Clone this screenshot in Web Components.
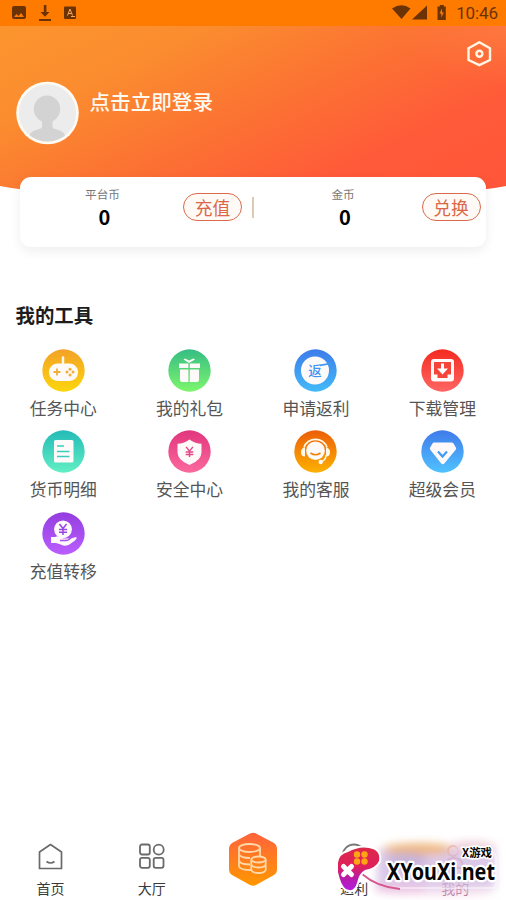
<!DOCTYPE html>
<html lang="zh-CN">
<head>
<meta charset="utf-8">
<title>我的</title>
<style>
html,body{margin:0;padding:0}
body{width:506px;height:900px;overflow:hidden;background:#fff;font-family:"Noto Sans CJK SC",sans-serif}
</style>
</head>
<body>
<profile-page></profile-page>
<script>
const define = (name, html, fill) => customElements.define(name, class extends HTMLElement {
  connectedCallback() {
    if (this.shadowRoot) return;
    this.attachShadow({mode: 'open'}).innerHTML = html;
    if (fill) fill(this, this.shadowRoot);
  }
});

define('status-bar', `
<style>
:host{display:flex;align-items:center;height:26px;box-sizing:border-box;background:#ff7b00;color:#6b3206;font:400 17px/26px Roboto,sans-serif}
svg{display:block}
.clock{width:44px;margin-right:8px;text-align:right;letter-spacing:-.1px;white-space:nowrap}
.left{flex:1}
</style>
<div class="left"><svg width="90" height="26" fill="#6b3206">
<path fill-rule="evenodd" d="M14 6h10a2 2 0 0 1 2 2v9a2 2 0 0 1-2 2H14a2 2 0 0 1-2-2V8a2 2 0 0 1 2-2zM14 17h10l-3-4-2.500 3-2-2z"/>
<path d="M43.800 5h2.600v7h3.100L45 16.800 40.500 12h3.300zM39 19h12v2H39z"/>
<rect x="64" y="6.500" width="12" height="12.500" rx="1"/>
<path d="M67.500 15.500l2.500-6.500 2.500 6.500M68.500 13.500h3M71 16.500h4" stroke="#ffa65a" stroke-width="1" fill="none"/></svg></div>
<svg width="62" height="26" fill="#6b3206"><path d="M0 8.500Q9.500 2 18.500 8.500L9.500 19zM35 5.500V19.500H20z" /><path fill-rule="evenodd" d="M45.500 6.500h2.300V5h4v1.500h2V20h-8.300zM50 8.500l-2.500 5h1.800v4l2.500-5h-1.800z"/></svg>
<div class="clock">10:46</div>`);

define('user-header', `
<style>
:host{display:block;height:164px;position:relative;background:radial-gradient(ellipse 110px 60px at 100% 0,rgba(255,130,70,.55),transparent),linear-gradient(155deg,#fc952e 0%,#fb8c2f 25%,#fc7033 53%,#ff5b39 75%,#ff5539 100%);clip-path:path('M0 0H506V160Q486 164 470 164H36Q20 164 0 160Z')}
.row{display:flex;padding:54.500px 0 0 15.500px;gap:11px}
.avatar{display:block}
.name{color:#fffaf0;font-size:20.600px;font-weight:500;line-height:30px;padding-top:5px;white-space:nowrap}
.set{position:absolute;right:13px;top:14px}
</style>
<div class="row">
<svg class="avatar" width="63" height="64" viewBox="0 0 63 64"><defs><clipPath id="c"><circle cx="31.500" cy="32" r="28.500"/></clipPath></defs><circle cx="31.500" cy="32" r="31.300" fill="#fffaf2"/><circle cx="31.500" cy="32" r="28.700" fill="#ececec"/><g clip-path="url(#c)" fill="#d3d3d3"><ellipse cx="31" cy="28" rx="13.200" ry="13.500"/><path d="M26 38h10.500v8c0 3 12 2 13 10v6H13v-6c1-8 13-7 13-10z"/></g></svg>
<div class="name">点击立即登录</div></div>
<svg class="set" width="28" height="28" fill="none" stroke="#fff6e3"><path d="M14.300 2.200L25 8.200V20L14.300 25.200 3.500 20V8.200z" stroke-width="2.400" stroke-linejoin="round"/><circle cx="14.400" cy="13.700" r="3" stroke-width="2.400"/></svg>`);

define('coin-balance', `
<style>
:host{display:flex;flex:none;box-sizing:border-box}
.info{text-align:center;width:80px;color:#777;font-size:11.600px;line-height:16px;padding-top:9px}
.info span{position:relative;left:-2px}
b{display:block;color:#000;font-weight:700;font-size:20px;line-height:30px}
button{all:unset;box-sizing:border-box;margin-top:16px;width:59px;height:28px;border:1.600px solid #d96a4b;border-radius:15px;color:#da6848;background:#fffaf5;font-size:17.800px;line-height:26px;text-align:center}
</style>
<div class="info"><span><slot></slot></span><b>0</b></div><button></button>`, (el, r) => r.querySelector('button').textContent = el.getAttribute('action'));

define('wallet-card', `
<style>
:host{display:flex;position:relative;margin:-13px 20px 0;height:70px;border-radius:11px;background:#fff;box-shadow:0 4px 12px rgba(0,0,0,.07)}
coin-balance{justify-content:space-between}
.a{padding-left:44.500px;width:222px}
.b{width:175.500px;margin-left:51px}
i{width:2px;height:21px;background:#dccbb4;margin:20px 0 0 10px}
</style>
<coin-balance class="a" action="充值">平台币</coin-balance><i></i><coin-balance class="b" action="兑换">金币</coin-balance>`);

const yen = (x, y, s, c) => `<path transform="translate(${x} ${y}) scale(${s})" d="M-4-6L0-1 4-6M0-1V6M-4.500 0h9M-4.500 3h9" stroke="${c}" stroke-width="1.700" fill="none"/>`;
const icons = {
  game: ['#f3a127', '#fcd60d', '<path d="M21 14V8.500" stroke="#fff8e8" stroke-width="2.500" stroke-linecap="round"/><rect x="7" y="14.500" width="29" height="17.500" rx="8.500"/><path d="M15 19.500v7M11.500 23h7" stroke="#efb032" stroke-width="1.800"/><g fill="#efb032"><circle cx="28" cy="20.300" r="1.500"/><circle cx="28" cy="26" r="1.500"/><circle cx="25" cy="23.100" r="1.500"/><circle cx="31" cy="23.100" r="1.500"/></g>'],
  gift: ['#36bd83', '#7df66d', '<path d="M11 14.500h9.400V19H11zM21.800 14.500H32V19H21.800zM12 20.500h8.400V33H14a2 2 0 0 1-2-2zM21.800 20.500H31V31a2 2 0 0 1-2 2h-7.200zM21 14l-5.500-3.500 1.500-1 4 2 4.500-2 1.500 1z"/>'],
  rebate: ['#3d7cea', '#43baf9', '<circle cx="21" cy="21.500" r="14"/><path d="M26 15.500L37 13.500v1.800L26 17.300z" fill="#3f99f2"/><text x="21" y="27" font-size="13.500" font-weight="500" text-anchor="middle" fill="#3d94f2">返</text>'],
  download: ['#f42b20', '#ff6663', '<rect x="10" y="10" width="23" height="22.500" rx="3"/><path d="M13 13h17v12.500h-3.500v3.500h-10v-3.500H13z" fill="#f54439"/><path d="M20 14.500h3v5h4L21.500 25.500 16 19.500h4z" fill="#fff"/>'],
  bill: ['#24bbb7', '#62efc4', '<rect x="12" y="10" width="19.500" height="22.500" rx="1.500"/><path d="M15 16h7M15 21.500h12.500M15 26.500h12.500" stroke="#37cec0" stroke-width="1.600"/>'],
  shield: ['#e1367d', '#fb699d', '<path d="M21.500 9.500q5 4 12 4.300v8.400q0 8-12 12.800-12-4.800-12-12.800v-8.400q7-.300 12-4.300z"/>' + yen(21.5, 22, .85, '#e54789')],
  service: ['#ec5e09', '#fdb100', '<path d="M10 17.500a12 11.500 0 0 1 23 0" fill="none" stroke="#fff7e8" stroke-width="1.700"/><circle cx="21.500" cy="20.700" r="9.300"/><path d="M11 17.500v9q-4 0-4-4.500 0-4 4-4.500zM32 17.500v9q4 0 4-4.500 0-4-4-4.500z" fill="#fff7e8"/><path d="M32 25q0 5.500-5.500 7" fill="none" stroke="#fff7e8" stroke-width="1.500"/><circle cx="26.700" cy="32" r="2.200"/><path d="M16.500 23q5 3.500 10 0" fill="none" stroke="#f38205" stroke-width="1.700"/>'],
  vip: ['#407bea', '#4fc2ff', '<path d="M13 12.500h17.500q1.300 0 2 1l2.500 4.300q.500 1-.300 2L23.500 33.300q-1.700 1.700-3.500 0L9.300 19.800q-.800-1-.300-2l2.500-4.300q.500-1 1.500-1z"/><path d="M17 21.500l4.500 5 4.500-5" fill="none" stroke="#439bf2" stroke-width="2.200"/>'],
  transfer: ['#943ddf', '#ba5eff', '<circle cx="21" cy="17.300" r="8.900"/><path d="M9 25h4q4-2 8 1.500h8L34 25q1.500 1-1 3.500l-6 4.300q-5 2-9-.500L14 31H9z"/><path d="M18 28.500h6q4-.300 5-3.500" stroke="#a44ced" stroke-width="1.300" fill="none"/>' + yen(21, 17.5, .9, '#9a46e6')]
};
define('tool-item', `
<style>
:host{display:flex;flex-direction:column;align-items:center;height:81.300px}
svg{display:block;flex:none}
span{color:#555;font-size:16.800px;line-height:24px;margin-top:4px;white-space:nowrap}
</style><div class="i"></div><span><slot></slot></span>`, (el, r) => {
  const [a, b, art] = icons[el.getAttribute('icon')];
  r.querySelector('.i').innerHTML = `<svg width="43" height="43" viewBox="0 0 43 43" fill="#fffafa"><defs><linearGradient id="g" x2="0" y2="1"><stop stop-color="${a}"/><stop offset="1" stop-color="${b}"/></linearGradient></defs><circle cx="21.500" cy="21.500" r="21.200" fill="url(#g)"/>${art}</svg>`;
});

define('tool-grid', `
<style>
:host{display:block;margin-top:53px}
h2{margin:0 0 0 15.500px;font-size:19.400px;line-height:30px;font-weight:700;color:#1c1c1c}
div{display:grid;grid-template-columns:repeat(4,126.400px);margin-top:19px}
</style><h2>我的工具</h2><div><slot></slot></div>`);

const navIcons = {
  home: '<svg width="26" height="28" fill="none" stroke="#6a6a6a" stroke-width="1.700"><path d="M1.500 10L12.500 2.500l11 7.500V26.500h-22z" stroke-linejoin="round"/><path d="M8.500 19.500q4 3 8 0"/></svg>',
  hall: '<svg width="28" height="28" fill="none" stroke="#6a6a6a" stroke-width="1.800"><rect x="2" y="2.500" width="9.800" height="10" rx="2"/><circle cx="20.700" cy="7.700" r="5"/><rect x="2" y="15.800" width="9.800" height="10" rx="2"/><rect x="15.700" y="15.800" width="9.800" height="10" rx="2"/></svg>',
  coins: '<svg width="50" height="54"><defs><linearGradient id="g" x2="0" y2="1"><stop stop-color="#ff633d"/><stop offset="1" stop-color="#ff9700"/></linearGradient></defs><path d="M22 1.500q3-1.500 6 0l18 9.500q3 2 3 5v22q0 3-3 5l-18 10q-3 1.500-6 0L4 43q-3-2-3-5V16q0-3 3-5z" fill="url(#g)"/><g fill="none" stroke="#ffd8a8" stroke-width="1.800"><ellipse cx="21.500" cy="16" rx="10.500" ry="4"/><path d="M11 16v18.500q1 3.500 12 3.500M32 16v8M11 22q1 4 11 4M11 28.500q1 4 11 4"/><ellipse cx="30.500" cy="27.500" rx="7.200" ry="3"/><path d="M23.300 27.500V38q1 3 7.200 3t7.200-3V27.500M23.300 32.500q1 3 7.200 3t7.200-3"/></g></svg>',
  rebate: '<svg width="28" height="28" fill="none" stroke="#777" stroke-width="1.800"><circle cx="14" cy="14" r="11.500"/></svg>',
  me: '<svg width="28" height="28" fill="none" stroke="#e09a80" stroke-width="1.800"><circle cx="12" cy="9" r="5"/><path d="M4 26q0-10 9-10t9 10z"/></svg>'
};
define('nav-item', `
<style>
:host{display:flex;flex-direction:column;align-items:center;width:101.200px;padding-top:11px;box-sizing:border-box;color:#3a3a3a;font-size:14px;line-height:20px}
:host([icon=coins]){padding-top:1px}
:host([icon=me]){color:#a3698b}
svg{display:block}
span{margin-top:8px}
</style><div></div><span><slot></slot></span>`, (el, r) => r.querySelector('div').innerHTML = navIcons[el.getAttribute('icon')]);

define('bottom-nav', `<style>:host{display:flex;height:69px}</style><slot></slot>`);

define('site-badge', `
<style>:host{position:absolute;left:330px;top:835px;width:176px;height:65px}svg{display:block}</style>
<svg width="176" height="65" viewBox="330 835 176 65">
<defs><filter id="b" x="-30%" y="-50%" width="160%" height="200%"><feGaussianBlur stdDeviation="4.500"/></filter>
<linearGradient id="g" x2="0" y2="1"><stop stop-color="#db2948"/><stop offset=".45" stop-color="#df1f5c"/><stop offset=".75" stop-color="#b61cb0"/><stop offset="1" stop-color="#b51ddd"/></linearGradient></defs>
<g filter="url(#b)"><rect x="377" y="850" width="118" height="38" fill="#d3bce3" opacity=".8"/><ellipse cx="419" cy="849" rx="36" ry="6" fill="#efb880"/><ellipse cx="407" cy="860" rx="20" ry="8" fill="#bba6d3" opacity=".6"/><ellipse cx="472" cy="847" rx="24" ry="6" fill="#f0d2dc"/><ellipse cx="400" cy="889" rx="26" ry="5" fill="#ecbce0" opacity=".8"/><ellipse cx="450" cy="892" rx="45" ry="4" fill="#f1c7df" opacity=".5"/></g>
<path d="M362 874q18 14 38 14h92q4 0 4-5v-24q0-5-4-7" fill="none" stroke="#fff" stroke-width="2" opacity=".45"/>
<path d="M362 874q15 13 38 15" fill="none" stroke="#d5578d" stroke-width="1.800"/>
<path d="M338 863Q339 854 348 852Q359 846 369 848Q381 850 379 861Q376 868 365 870Q359 873 357 883Q354 893 346 889Q341 886 338 872Z" fill="url(#g)" stroke="#fff" stroke-width="4" paint-order="stroke" stroke-linejoin="round"/>
<g fill="#ffa414"><circle cx="357" cy="854.500" r="3.200"/><circle cx="364.500" cy="854.500" r="3.200"/><circle cx="357" cy="861.500" r="3.200"/><circle cx="364.500" cy="861.500" r="3.200"/></g>
<path d="M343.500 866.500l8 8M351.500 866.500l-8 8" stroke="#fff" stroke-width="5" stroke-linecap="round"/>
<g stroke="#fff" paint-order="stroke" stroke-linejoin="round" fill="#050505" font-weight="700">
<text x="387" y="879.500" font-size="24" font-family="Noto Sans,sans-serif" textLength="108" lengthAdjust="spacingAndGlyphs" stroke-width="4.500">XYouXi.net</text>
<text x="462" y="856.500" font-size="11" font-family="Noto Sans CJK SC,sans-serif" textLength="30" lengthAdjust="spacingAndGlyphs" stroke-width="3">X游戏</text></g>
</svg>`);

define('profile-page', `
<style>:host{display:flex;flex-direction:column;width:506px;height:900px;position:relative;overflow:hidden;background:#fff}bottom-nav{margin-top:auto}</style>
<status-bar></status-bar><user-header></user-header><wallet-card></wallet-card>
<tool-grid><tool-item icon="game">任务中心</tool-item><tool-item icon="gift">我的礼包</tool-item><tool-item icon="rebate">申请返利</tool-item><tool-item icon="download">下载管理</tool-item><tool-item icon="bill">货币明细</tool-item><tool-item icon="shield">安全中心</tool-item><tool-item icon="service">我的客服</tool-item><tool-item icon="vip">超级会员</tool-item><tool-item icon="transfer">充值转移</tool-item></tool-grid>
<bottom-nav><nav-item icon="home">首页</nav-item><nav-item icon="hall">大厅</nav-item><nav-item icon="coins"></nav-item><nav-item icon="rebate">返利</nav-item><nav-item icon="me">我的</nav-item></bottom-nav>
<site-badge></site-badge>`);
</script>
</body>
</html>
